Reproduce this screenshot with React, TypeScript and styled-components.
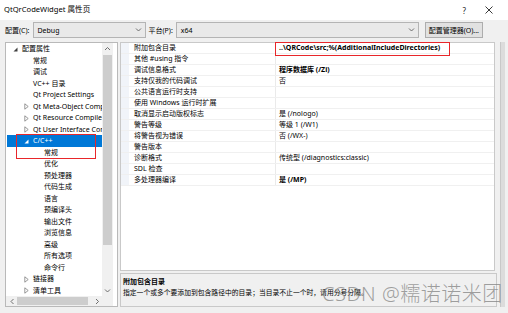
import React from "react";
import styled, { createGlobalStyle } from "styled-components";

const GlobalStyle = createGlobalStyle`
  html, body {
    margin: 0;
    padding: 0;
  }
  body {
    font-family: "Noto Sans", "Noto Sans CJK SC", sans-serif;
    color: #000;
  }
`;

type TreeItem = {
  label: string;
  level: number;
  arrow?: "open" | "closed";
  selected?: boolean;
};

const treeItems: TreeItem[] = [
  { label: "配置属性", level: 0, arrow: "open" },
  { label: "常规", level: 1 },
  { label: "调试", level: 1 },
  { label: "VC++ 目录", level: 1 },
  { label: "Qt Project Settings", level: 1 },
  { label: "Qt Meta-Object Compiler", level: 1, arrow: "closed" },
  { label: "Qt Resource Compiler", level: 1, arrow: "closed" },
  { label: "Qt User Interface Compiler", level: 1, arrow: "closed" },
  { label: "C/C++", level: 1, arrow: "open", selected: true },
  { label: "常规", level: 2 },
  { label: "优化", level: 2 },
  { label: "预处理器", level: 2 },
  { label: "代码生成", level: 2 },
  { label: "语言", level: 2 },
  { label: "预编译头", level: 2 },
  { label: "输出文件", level: 2 },
  { label: "浏览信息", level: 2 },
  { label: "高级", level: 2 },
  { label: "所有选项", level: 2 },
  { label: "命令行", level: 2 },
  { label: "链接器", level: 1, arrow: "closed" },
  { label: "清单工具", level: 1, arrow: "closed" },
];

const props: [string, string, boolean][] = [
  ["附加包含目录", "..\\QRCode\\src;%(AdditionalIncludeDirectories)", true],
  ["其他 #using 指令", "", false],
  ["调试信息格式", "程序数据库 (/Zi)", true],
  ["支持仅我的代码调试", "否", false],
  ["公共语言运行时支持", "", false],
  ["使用 Windows 运行时扩展", "", false],
  ["取消显示启动版权标志", "是 (/nologo)", false],
  ["警告等级", "等级 1 (/W1)", false],
  ["将警告视为错误", "否 (/WX-)", false],
  ["警告版本", "", false],
  ["诊断格式", "传统型 (/diagnostics:classic)", false],
  ["SDL 检查", "", false],
  ["多处理器编译", "是 (/MP)", true],
];

const Chevron = ({ dir = "down" }: { dir?: "down" | "up" | "left" | "right" }) => {
  const pts = {
    down: "1,1.5 3.5,4 6,1.5",
    up: "1,4 3.5,1.5 6,4",
    left: "4.5,1 2,3.5 4.5,6",
    right: "2,1 4.5,3.5 2,6",
  }[dir];
  const w = dir === "down" || dir === "up" ? 7 : 6;
  const h = dir === "down" || dir === "up" ? 5.5 : 7;
  return (
    <svg width={w} height={h} viewBox={`0 0 ${w} ${h}`}>
      <polyline points={pts} fill="none" stroke="#606060" strokeWidth="0.9" />
    </svg>
  );
};

const Arrow = ({ kind, light }: { kind: "open" | "closed"; light?: boolean }) =>
  kind === "open" ? (
    <svg width="5" height="5" viewBox="0 0 5 5">
      <polygon points="4.5,0.5 4.5,4.5 0.5,4.5" fill={light ? "#fff" : "#404040"} />
    </svg>
  ) : (
    <svg width="5" height="7" viewBox="0 0 5 7">
      <polygon points="0.8,0.8 4.2,3.5 0.8,6.2" fill="none" stroke="#808080" strokeWidth="0.8" />
    </svg>
  );

const App = () => {
  return (
    <Window>
      <GlobalStyle />
      <TitleBar>
        <Title>QtQrCodeWidget 属性页</Title>
        <TitleButtons>
          <Help>?</Help>
          <svg width="8" height="8" viewBox="0 0 8 8">
            <path d="M0.5 0.5 L7.5 7.5 M7.5 0.5 L0.5 7.5" stroke="#222" strokeWidth="0.9" />
          </svg>
        </TitleButtons>
      </TitleBar>

      <Toolbar>
        <Label>配置(C):</Label>
        <Combo $width={113}>
          <span>Debug</span>
          <Chevron />
        </Combo>
        <Label>平台(P):</Label>
        <Combo $width={243}>
          <span>x64</span>
          <Chevron />
        </Combo>
        <Button>配置管理器(O)...</Button>
      </Toolbar>

      <Body>
        <TreePanel>
          <TreeInner>
            <TreeList>
              {treeItems.map((it, i) => (
                <TreeRow key={i} $level={it.level} $selected={!!it.selected}>
                  {it.arrow && (
                    <ArrowBox>
                      <Arrow kind={it.arrow} light={it.selected} />
                    </ArrowBox>
                  )}
                  {it.label}
                </TreeRow>
              ))}
            </TreeList>
            <VScroll>
              <ScrollBtn>
                <Chevron dir="up" />
              </ScrollBtn>
              <VTrack>
                <VThumb />
              </VTrack>
              <ScrollBtn>
                <Chevron dir="down" />
              </ScrollBtn>
            </VScroll>
          </TreeInner>
          <HScrollRow>
            <HScroll>
              <HBtn>
                <Chevron dir="left" />
              </HBtn>
              <HTrack>
                <HThumb />
              </HTrack>
              <HBtn>
                <Chevron dir="right" />
              </HBtn>
            </HScroll>
            <Corner />
          </HScrollRow>
        </TreePanel>

        <RightCol>
          <Grid>
            {props.map(([name, value, bold], i) => (
              <GridRow key={i}>
                <Gutter />
                <NameCell>{name}</NameCell>
                <ValueCell $bold={bold}>{value}</ValueCell>
              </GridRow>
            ))}
          </Grid>
          <Desc>
            <DescTitle>附加包含目录</DescTitle>
            <DescText>指定一个或多个要添加到包含路径中的目录；当目录不止一个时，请用分号分隔。</DescText>
          </Desc>
        </RightCol>

        <EdgeStrip>
          <EdgeBar />
        </EdgeStrip>
      </Body>

      <RedBox style={{ left: 16, top: 134, width: 80, height: 25 }} />
      <RedBox style={{ left: 275, top: 42, width: 175, height: 14 }} />
      <Watermark>CSDN @糯诺诺米团</Watermark>
    </Window>
  );
};

export default App;

const Window = styled.div`
  position: relative;
  width: 508px;
  height: 313px;
  overflow: hidden;
  background: #f0f0f0;
  display: flex;
  flex-direction: column;
`;

const TitleBar = styled.div`
  height: 20px;
  background: #ffffff;
  display: flex;
  align-items: center;
  justify-content: space-between;
  padding: 0 15px 0 4px;
`;

const Title = styled.div`
  font-size: 7.6px;
  line-height: 20px;
  margin-top: -2px;
`;

const TitleButtons = styled.div`
  display: flex;
  align-items: center;
  gap: 19px;
`;

const Help = styled.span`
  font-size: 8px;
  color: #222;
`;

const Toolbar = styled.div`
  height: 16px;
  margin-top: 2px;
  display: flex;
  align-items: center;
  padding-left: 5px;
`;

const Label = styled.span`
  font-size: 7px;
  margin-right: 3px;
  white-space: nowrap;
`;

const Combo = styled.div<{ $width: number }>`
  width: ${(p) => p.$width}px;
  height: 16px;
  box-sizing: border-box;
  border: 1px solid #b4b4b4;
  background: #e9e9e9;
  display: flex;
  align-items: center;
  justify-content: space-between;
  padding: 0 3px 0 4px;
  font-size: 7px;
  margin-right: 3px;
`;

const Button = styled.div`
  width: 58px;
  height: 16px;
  box-sizing: border-box;
  margin-left: 3px;
  border: 1px solid #adadad;
  background: #e1e1e1;
  font-size: 7px;
  display: flex;
  align-items: center;
  justify-content: center;
  white-space: nowrap;
`;

const Body = styled.div`
  display: flex;
  margin-top: 4px;
  padding-left: 5px;
  height: 265px;
`;

const TreePanel = styled.div`
  width: 113px;
  box-sizing: border-box;
  border: 1px solid #b9b9b9;
  background: #fff;
  padding-right: 4px;
  display: flex;
  flex-direction: column;
`;

const TreeInner = styled.div`
  display: flex;
  height: 253px;
`;

const TreeList = styled.div`
  width: 96px;
  overflow: hidden;
  padding-top: 0.3px;
`;

const TreeRow = styled.div<{ $level: number; $selected: boolean }>`
  position: relative;
  height: 11.5px;
  line-height: 11.5px;
  font-size: 7px;
  white-space: nowrap;
  padding-left: ${(p) => 15 + p.$level * 11}px;
  margin-left: 1px;
  background: ${(p) => (p.$selected ? "#0078d7" : "transparent")};
  color: ${(p) => (p.$selected ? "#fff" : "#000")};
`;

const ArrowBox = styled.span`
  position: absolute;
  top: 0;
  bottom: 0;
  width: 6px;
  display: flex;
  align-items: center;
  margin-left: -9px;
`;

const VScroll = styled.div`
  width: 11px;
  background: #f0f0f0;
  display: flex;
  flex-direction: column;
`;

const ScrollBtn = styled.div`
  height: 11px;
  display: flex;
  align-items: center;
  justify-content: center;
`;

const VTrack = styled.div`
  flex: 1;
  padding: 1px 1px;
`;

const VThumb = styled.div`
  height: 190px;
  background: #cdcdcd;
`;

const HScrollRow = styled.div`
  display: flex;
  height: 11px;
`;

const HScroll = styled.div`
  width: 96px;
  background: #f0f0f0;
  display: flex;
  align-items: stretch;
`;

const HBtn = styled.div`
  width: 11px;
  display: flex;
  align-items: center;
  justify-content: center;
`;

const HTrack = styled.div`
  flex: 1;
  padding: 1px 0;
`;

const HThumb = styled.div`
  width: 71px;
  height: 100%;
  background: #cdcdcd;
`;

const Corner = styled.div`
  width: 11px;
  background: #f0f0f0;
`;

const RightCol = styled.div`
  width: 377px;
  margin-left: 2px;
  display: flex;
  flex-direction: column;
  gap: 2px;
`;

const Grid = styled.div`
  width: 375px;
  height: 229px;
  box-sizing: border-box;
  border: 1px solid #c9c9c9;
  background: #fff;
`;

const GridRow = styled.div`
  display: flex;
  height: 11px;
  box-sizing: border-box;
  border-bottom: 1px solid #f0f0f0;
  font-size: 7px;
  line-height: 10px;
  white-space: nowrap;
`;

const Gutter = styled.div`
  width: 8px;
  background: #f1f4f9;
`;

const NameCell = styled.div`
  width: 147px;
  padding-left: 5px;
  box-sizing: border-box;
  border-right: 1px solid #eaeaea;
`;

const ValueCell = styled.div<{ $bold: boolean }>`
  flex: 1;
  padding-left: 3px;
  font-weight: ${(p) => (p.$bold ? 700 : 400)};
`;

const Desc = styled.div`
  height: 34px;
  box-sizing: border-box;
  border: 1px solid #c9c9c9;
  padding: 2px 2px;
  display: flex;
  flex-direction: column;
`;

const DescTitle = styled.div`
  font-size: 7px;
  font-weight: 700;
  line-height: 11px;
`;

const DescText = styled.div`
  font-size: 6.8px;
  line-height: 11px;
  white-space: nowrap;
`;

const EdgeStrip = styled.div`
  flex: 1;
  display: flex;
  justify-content: center;
  background: #f0f0f0;
`;

const EdgeBar = styled.div`
  width: 4px;
  background: #dcdcdc;
  border-left: 1px solid #c8c8c8;
`;

const RedBox = styled.div`
  position: absolute;
  box-sizing: border-box;
  border: 1.5px solid #e8262a;
`;

const Watermark = styled.div`
  position: absolute;
  left: 322px;
  top: 278px;
  font-family: "Noto Sans", "Noto Sans CJK SC", sans-serif;
  font-weight: 300;
  font-size: 20px;
  color: rgba(130, 130, 130, 0.75);
  white-space: nowrap;
  letter-spacing: 0.5px;
`;
